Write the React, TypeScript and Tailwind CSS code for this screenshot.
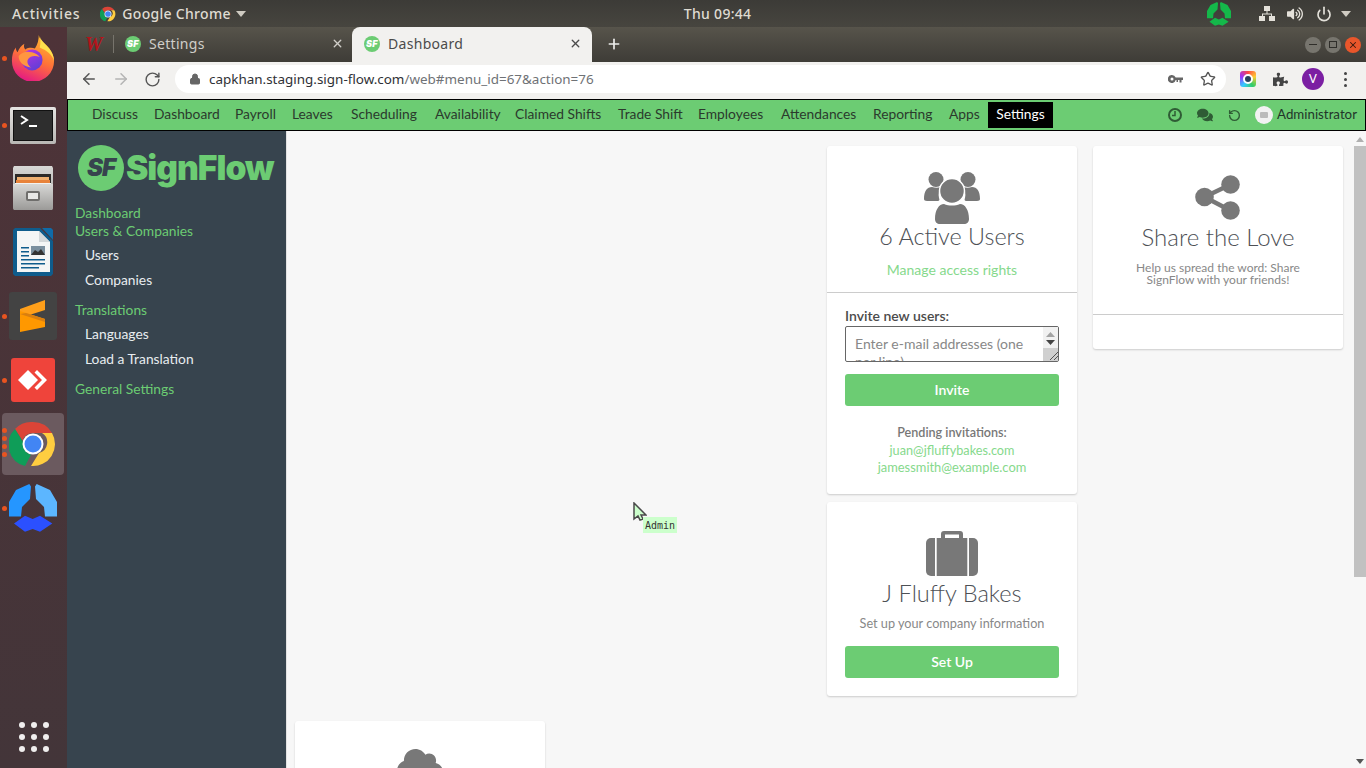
import * as React from "react"
import { FaComments, FaCloud, FaPuzzlePiece, FaVolumeUp } from "react-icons/fa"
import { ArrowLeft, ArrowRight, Lock, Plus, Power, RotateCcw, RotateCw, Star, X } from "lucide-react"

const raleway = "font-['Lato','Noto_Sans',sans-serif]"

const navItems = [
	{ title: "Discuss", width: "w-[62px]" },
	{ title: "Dashboard", width: "w-[81px]" },
	{ title: "Payroll", width: "w-[57px]" },
	{ title: "Leaves", width: "w-[59px]" },
	{ title: "Scheduling", width: "w-[84px]" },
	{ title: "Availability", width: "w-[80px]" },
	{ title: "Claimed Shifts", width: "w-[103px]" },
	{ title: "Trade Shift", width: "w-[80px]" },
	{ title: "Employees", width: "w-[83px]" },
	{ title: "Attendances", width: "w-[92px]" },
	{ title: "Reporting", width: "w-[76px]" },
	{ title: "Apps", width: "w-[47px]" },
]

function ChromeIcon({ size }: { size: number }) {
	return (
		<svg width={size} height={size} viewBox="0 0 48 48">
			<path d="M24 2a22 22 0 0 1 19 11H24a11 11 0 0 0-10.500 7.500L6 9A22 22 0 0 1 24 2z" fill="#db4437" />
			<path d="M6 9l8 13a11 11 0 0 0 8 12.800L16 46A22 22 0 0 1 6 9z" fill="#0f9d58" />
			<path d="M43 13a22 22 0 0 1-21 33l8-13a11 11 0 0 0 3-20z" fill="#ffcd40" />
			<circle cx="24" cy="24" r="10.500" fill="#fff" />
			<circle cx="24" cy="24" r="8.500" fill="#4285f4" />
		</svg>
	)
}

function TriLogo({ size, left, right, bottom }: { size: number; left: string; right: string; bottom: string }) {
	return (
		<svg width={size} height={size} viewBox="0 0 48 48">
			<polygon points="20.300,0 22,2.500 21,15 13,23 12,32.500 0,32.500 0,18 7,6" fill={left} />
			<polygon points="27.700,0 26,2.500 27,15 35,23 36,32.500 48,32.500 48,18 41,6" fill={right} />
			<polygon points="5,39.400 16,31.700 23.700,35 31,31.700 43.300,39.400 31,47.700 23.700,45 16,47.700" fill={bottom} />
		</svg>
	)
}

function SfBadge({ size }: { size: number }) {
	return (
		<div className="flex shrink-0 items-center justify-center rounded-full bg-[#6ccc73]" style={{ width: size, height: size }}>
			<span className="font-['Inter',sans-serif] font-black italic leading-none text-white text-[9px]">SF</span>
		</div>
	)
}

function Firefox() {
	return (
		<svg width="46" height="46" viewBox="0 0 46 48">
			<defs>
				<linearGradient id="ffa" x1="0.700" y1="0" x2="0.300" y2="1">
					<stop offset="0" stopColor="#ffbd2e" />
					<stop offset="0.500" stopColor="#ff7139" />
					<stop offset="1" stopColor="#e31587" />
				</linearGradient>
				<linearGradient id="ffb" x1="0.200" y1="0" x2="0.800" y2="1">
					<stop offset="0" stopColor="#b833e1" />
					<stop offset="1" stopColor="#5b3fd6" />
				</linearGradient>
			</defs>
			<path d="M29 0c1 6 7 9 11 14 3 4 5 8 5 13a22 22 0 1 1-44 0c0-5 1-10 4-14 0 2 1 4 2 5 1-4 4-7 7-9-1 3 0 5 1 6 3-2 7-2 10-1 3-4 4-9 4-14z" fill="url(#ffa)" />
			<path d="M30 1c1 5 6 8 10 13 3 4 5 9 5 13-2-7-8-11-15-14 1-4 1-8 0-12z" fill="#ffe14d" />
			<circle cx="22" cy="26" r="11" fill="url(#ffb)" />
			<path d="M8 22c4-5 9-5 14-4 3 1 6 2 8 5-5-2-10-1-12 2-2 3 0 7 3 9-7-1-13-5-13-12z" fill="#ff9640" />
		</svg>
	)
}

function Terminal() {
	return (
		<div className="flex h-[37px] w-[46px] items-center justify-center rounded-[2px] bg-gradient-to-b from-[#e5e4e2] to-[#b8b7b4]">
			<div className="h-[31px] w-[40px] border border-[#111] bg-[#2e2e2e] pl-[6px] pt-[4px]">
				<svg width="20" height="16" viewBox="0 0 20 16">
					<path d="M1 1l6 4-6 4" stroke="#fff" strokeWidth="2" fill="none" />
					<rect x="9" y="10" width="8" height="2" fill="#fff" />
				</svg>
			</div>
		</div>
	)
}

function FileCabinet() {
	return (
		<svg width="42" height="44" viewBox="0 0 42 44">
			<defs>
				<linearGradient id="cab" x1="0" y1="0" x2="0" y2="1">
					<stop offset="0" stopColor="#d8d8d6" />
					<stop offset="1" stopColor="#9b9a98" />
				</linearGradient>
			</defs>
			<path d="M2 0h38l1 2v40l-1 2H2l-1-2V2z" fill="url(#cab)" />
			<rect x="3" y="8" width="36" height="14" fill="#2d2a28" />
			<rect x="5" y="11" width="32" height="3" fill="#f0b070" />
			<rect x="4" y="14" width="34" height="3" fill="#e8833a" />
			<rect x="3" y="17" width="36" height="3" fill="#f2f2f0" />
			<path d="M1 18h40v24l-1 2H2l-1-2z" fill="url(#cab)" />
			<rect x="14" y="25" width="14" height="10" rx="2" fill="#6f6e6c" />
			<rect x="16" y="27" width="10" height="6" fill="#e8e8e6" />
		</svg>
	)
}

function Writer() {
	return (
		<svg width="40" height="48" viewBox="0 0 40 48">
			<path d="M2 0h25l13 13v33l-2 2H2l-2-2V2z" fill="#0f5c8c" />
			<path d="M29 0h9l2 2v10z" fill="#0f6ba8" />
			<path d="M4 3h22l11 11v30H4z" fill="#f4f5f5" />
			<path d="M26 3v11h11z" fill="#d4d8da" />
			<rect x="18" y="18" width="14" height="9" fill="#7b8f9e" />
			<path d="M18 27l4-5 3 2 3-3 4 6z" fill="#333" />
			<rect x="8" y="19" width="8" height="1.500" fill="#0f5c8c" />
			<rect x="8" y="23" width="8" height="1.500" fill="#0f5c8c" />
			<rect x="8" y="27" width="8" height="1.500" fill="#0f5c8c" />
			<rect x="8" y="31" width="24" height="1.500" fill="#0f5c8c" />
			<rect x="8" y="35" width="24" height="1.500" fill="#0f5c8c" />
			<rect x="8" y="39" width="18" height="1.500" fill="#0f5c8c" />
		</svg>
	)
}

function Sublime() {
	return (
		<div className="flex h-[48px] w-[48px] items-center justify-center rounded-[3px] bg-[#434343]">
			<svg width="26" height="32" viewBox="0 0 26 32">
				<path d="M25 0v10L0 18V9z" fill="#ff9f1a" />
				<path d="M0 11l25 8v8L0 32V22z" fill="#ff9800" />
				<path d="M0 14l25 8v-3L6 13z" fill="#d97f10" />
			</svg>
		</div>
	)
}

function AnyDesk() {
	return (
		<div className="flex h-[44px] w-[44px] items-center justify-center rounded-[3px] bg-[#ef443b]">
			<svg width="32" height="22" viewBox="0 0 32 22">
				<path d="M11 1l10 10-10 10L1 11z" fill="#fff" />
				<path d="M20 1l10 10-10 10-2.500-2.500L25 11l-7.500-7.500z" fill="#fff" />
			</svg>
		</div>
	)
}

function Dots({ count }: { count: number }) {
	return (
		<div className="flex w-[9px] shrink-0 flex-col items-center gap-[3px]">
			{Array.from({ length: count }).map((_, i) => (
				<span key={i} className="size-[5px] rounded-full bg-[#e95420]" />
			))}
		</div>
	)
}

function Dock() {
	return (
		<aside className="flex w-[67px] shrink-0 flex-col bg-gradient-to-b from-[#4e3338] to-[#433539] pt-[8px]">
			<div className="flex h-[46px] items-center"><Dots count={1} /><div className="ml-[1px]"><Firefox /></div></div>
			<div className="mt-[26px] flex h-[37px] items-center"><Dots count={1} /><div className="ml-[1px]"><Terminal /></div></div>
			<div className="mt-[22px] flex h-[44px] items-center pl-[12px]"><FileCabinet /></div>
			<div className="mt-[18px] flex h-[48px] items-center pl-[13px]"><Writer /></div>
			<div className="mt-[16px] flex h-[48px] items-center"><Dots count={1} /><Sublime /></div>
			<div className="mt-[18px] flex h-[44px] items-center"><Dots count={1} /><div className="ml-[2px]"><AnyDesk /></div></div>
			<div className="relative ml-[2px] mt-[11px] flex h-[62px] w-[62px] items-center justify-center rounded-[4px] bg-[#6b5a5f]">
				<div className="absolute left-[-2px] top-[15px]"><Dots count={4} /></div>
				<ChromeIcon size={48} />
			</div>
			<div className="mt-[8px] flex h-[50px] items-center"><Dots count={1} /><TriLogo size={48} left="#2596ff" right="#5cb6ff" bottom="#2b50ff" /></div>
			<div className="mt-auto mb-[16px] grid w-[30px] grid-cols-3 gap-[6px] self-center">
				{Array.from({ length: 9 }).map((_, i) => (
					<span key={i} className="size-[6px] rounded-full bg-[#f0eeee]" />
				))}
			</div>
		</aside>
	)
}

function TopBar() {
	return (
		<header className="flex h-[27px] shrink-0 items-center bg-gradient-to-b from-[#3c3b37] to-[#47453f] font-['Noto_Sans',sans-serif] text-[14px] font-medium tracking-[0.3px] text-[#dfdbd2]">
			<span className="ml-[12px] tracking-[0.8px]">Activities</span>
			<div className="ml-[20px]"><ChromeIcon size={16} /></div>
			<span className="ml-[6px]">Google Chrome</span>
			<svg className="ml-[5px]" width="10" height="6" viewBox="0 0 10 6"><path d="M0 0h10L5 6z" fill="#cfcbc2" /></svg>
			<span className="ml-[438px]">Thu 09:44</span>
			<div className="ml-auto flex items-center">
				<TriLogo size={24} left="#14b84a" right="#14b84a" bottom="#14b84a" />
				<svg className="ml-[28px]" width="16" height="16" viewBox="0 0 16 16" fill="#e4e1da">
					<rect x="5" y="0" width="6" height="5" />
					<rect x="0" y="10" width="6" height="5" />
					<rect x="10" y="10" width="6" height="5" />
					<path d="M7.500 5h1v2.500H13V10h-1V8.500H4V10H3V7.500h4.500z" />
				</svg>
				<FaVolumeUp className="ml-[12px] size-[16px] text-[#e4e1da]" />
				<Power className="ml-[13px] size-[16px] text-[#e4e1da]" strokeWidth={2.5} />
				<svg className="ml-[9px] mr-[15px]" width="10" height="6" viewBox="0 0 10 6"><path d="M0 0h10L5 6z" fill="#cfcbc2" /></svg>
			</div>
		</header>
	)
}

function TabStrip() {
	return (
		<div className="flex h-[35px] shrink-0 bg-gradient-to-b from-[#57544b] to-[#3e3c37] font-['Noto_Sans',sans-serif] text-[14px] tracking-[0.3px]">
			<div className="flex h-full w-[285px] items-center pb-[2px] pl-[18px] text-[#d0cec9]">
				<span className="w-[18px] font-['Liberation_Serif',serif] text-[20px] font-bold italic leading-none text-[#b3141b]">W</span>
				<span className="ml-[10px] h-[18px] w-px bg-[#77746c]" />
				<div className="ml-[11px]"><SfBadge size={16} /></div>
				<span className="ml-[8px]">Settings</span>
				<X className="ml-auto mr-[8px] size-[13px]" strokeWidth={2.5} />
			</div>
			<div className="flex h-full w-[240px] items-center rounded-t-[8px] bg-[#f2f1ef] pb-[2px] pl-[12px] pr-[10px] text-[#4b4b4b]">
				<SfBadge size={16} />
				<span className="ml-[8px]">Dashboard</span>
				<X className="ml-auto size-[13px] text-[#4b4b4b]" strokeWidth={2.5} />
			</div>
			<Plus className="ml-[14px] mt-[9px] size-[16px] text-[#eeeeec]" strokeWidth={2.5} />
			<div className="ml-auto mr-[5px] flex items-center gap-[4px]">
				<span className="flex size-[16px] items-center justify-center rounded-full bg-[#77756e]"><span className="h-px w-[8px] bg-[#2f2e2a]" /></span>
				<span className="flex size-[16px] items-center justify-center rounded-full bg-[#77756e]"><span className="h-[7px] w-[8px] border border-[#2f2e2a]" /></span>
				<span className="flex size-[16px] items-center justify-center rounded-full bg-[#e9562b]"><X className="size-[10px] text-[#3a1b10]" strokeWidth={2.5} /></span>
			</div>
		</div>
	)
}

function Toolbar() {
	return (
		<div className="flex h-[37px] shrink-0 items-center bg-[#f2f1ef] pb-[3px]">
			<ArrowLeft className="ml-[13px] size-[18px] text-[#555]" strokeWidth={2} />
			<ArrowRight className="ml-[14px] size-[18px] text-[#b4b4b4]" strokeWidth={2} />
			<RotateCw className="ml-[14px] size-[17px] text-[#555]" strokeWidth={2} />
			<div className="ml-[14px] flex h-[28px] w-[1051px] items-center rounded-full bg-white pl-[14px] pr-[10px] font-['Noto_Sans',sans-serif] text-[13.450px]">
				<Lock className="size-[12px] text-[#666]" fill="#666" strokeWidth={2} />
				<span className="ml-[8px] text-[#2f3136]">capkhan.staging.sign-flow.com</span>
				<span className="text-[#6f7276]">/web#menu_id=67&amp;action=76</span>
				<svg className="ml-auto" width="15" height="8" viewBox="0 0 15 8" fill="#666">
					<path d="M4 0a4 4 0 0 1 3.700 2.500H15V5h-1.500v2.500h-2V5H10v2H8.500V5h-.8A4 4 0 1 1 4 0zm0 2.500a1.500 1.500 0 1 0 0 3 1.500 1.500 0 0 0 0-3z" />
				</svg>
				<Star className="ml-[17px] size-[16px] text-[#555]" strokeWidth={2} />
			</div>
			<div className="ml-[14px] flex size-[16px] items-center justify-center rounded-[3px] bg-[conic-gradient(#f44,#fc3,#3c6,#3cf,#93f,#f44)]">
				<span className="size-[10px] rounded-full border-2 border-white bg-[#27405c]" />
			</div>
			<FaPuzzlePiece className="ml-[17px] size-[15px] text-[#444]" />
			<span className="ml-[14px] flex size-[22px] items-center justify-center rounded-full bg-[#7b1fa2] font-['Noto_Sans',sans-serif] text-[13px] text-white">V</span>
			<div className="ml-[20px] flex flex-col gap-[3px]">
				<span className="size-[3px] rounded-full bg-[#444]" />
				<span className="size-[3px] rounded-full bg-[#444]" />
				<span className="size-[3px] rounded-full bg-[#444]" />
			</div>
		</div>
	)
}

function AppNav() {
	return (
		<nav className={`flex h-[32px] shrink-0 items-center border border-black bg-[#6ccc73] pl-[16px] text-[13.800px] text-[#2b3a2d] ${raleway}`}>
			{navItems.map((item) => (
				<a key={item.title} className={`flex h-[26px] items-center whitespace-nowrap pb-px pl-[8px] ${item.width}`}>
					{item.title}
				</a>
			))}
			<a className="flex h-[26px] w-[65px] items-center justify-center bg-black pb-px text-white">Settings</a>
			<div className="ml-auto flex items-center pr-[8px] text-[#25482b]">
				<svg width="14" height="14" viewBox="0 0 14 14" fill="none" stroke="#2f5c35" strokeWidth="2">
					<circle cx="7" cy="7" r="6" />
					<path d="M7 3v4.500H4" strokeWidth="1.500" />
				</svg>
				<FaComments className="ml-[15px] size-[16px] text-[#2f5c35]" />
				<RotateCcw className="ml-[15px] size-[13px] text-[#2f5c35]" strokeWidth={2.5} />
				<span className="ml-[14px] flex size-[18px] items-center justify-center rounded-full bg-[#f2f2f2]">
					<span className="h-[6px] w-[8px] rounded-[1px] bg-[#bbb]" />
				</span>
				<span className="ml-[4px] pb-px text-[13.300px] text-[#22352a]">Administrator</span>
			</div>
		</nav>
	)
}

function Sidebar() {
	const green = "text-[#6ccc73]"
	const white = "text-[#e8edf0] pl-[10px]"
	return (
		<aside className={`flex w-[220px] shrink-0 flex-col border-r border-[#e2e2e2] bg-[#37444e] pl-[8px] text-[13.800px] ${raleway}`}>
			<div className="mt-[14px] flex h-[46px] items-center pl-[3px]">
				<div className="relative flex size-[46px] shrink-0 items-center justify-center rounded-full bg-[#6ccc73]">
					<span className="font-['Inter',sans-serif] text-[24px] font-black italic leading-none tracking-[-1px] text-[#37444e]">SF</span>
				</div>
				<span className="ml-[2px] font-['Inter',sans-serif] text-[33.600px] font-black leading-none tracking-[-1px] text-[#6ccc73]">SignFlow</span>
			</div>
			<a className={`mt-[13px] h-[18px] leading-[18px] ${green}`}>Dashboard</a>
			<a className={`h-[18px] leading-[18px] ${green}`}>Users &amp; Companies</a>
			<a className={`mt-[6px] h-[18px] leading-[18px] ${white}`}>Users</a>
			<a className={`mt-[7px] h-[18px] leading-[18px] ${white}`}>Companies</a>
			<a className={`mt-[12px] h-[18px] leading-[18px] ${green}`}>Translations</a>
			<a className={`mt-[6px] h-[18px] leading-[18px] ${white}`}>Languages</a>
			<a className={`mt-[7px] h-[18px] leading-[18px] ${white}`}>Load a Translation</a>
			<a className={`mt-[12px] h-[18px] leading-[18px] ${green}`}>General Settings</a>
		</aside>
	)
}

function UsersIcon() {
	return (
		<svg width="56" height="52" viewBox="0 0 56 52" fill="#787878">
			<circle cx="12" cy="7.500" r="7.500" />
			<circle cx="44" cy="7.500" r="7.500" />
			<path d="M0 27c0-8 3-12 8-12 3 1 6 1 9 0-2 3-3 7-2 11 1 2 0 3-1 3H3c-2 0-3-1-3-2z" />
			<path d="M56 27c0-8-3-12-8-12-3 1-6 1-9 0 2 3 3 7 2 11-1 2 0 3 1 3h11c2 0 3-1 3-2z" />
			<circle cx="28" cy="19" r="12.500" stroke="#fff" strokeWidth="1.500" />
			<path d="M11 47c0-9 4-15 9-15 5 2 11 2 16 0 5 0 9 6 9 15 0 3-2 5-5 5H16c-3 0-5-2-5-5z" />
		</svg>
	)
}

function SuitcaseIcon() {
	return (
		<svg width="52" height="45" viewBox="0 0 52 45" fill="#787878">
			<path d="M15 7V3a3 3 0 0 1 3-3h16a3 3 0 0 1 3 3v4h-4V3.500H19V7z" />
			<path d="M9 7v38H5a5 5 0 0 1-5-5V12a5 5 0 0 1 5-5z" />
			<rect x="10.700" y="7" width="30.600" height="38" />
			<path d="M43 7v38h4a5 5 0 0 0 5-5V12a5 5 0 0 0-5-5z" />
		</svg>
	)
}

function ShareIcon() {
	return (
		<svg width="46" height="46" viewBox="0 0 46 46" fill="#787878">
			<path d="M9.500 22L35.500 9.500M9.500 22l26 13.500" stroke="#787878" strokeWidth="4.500" />
			<circle cx="9.500" cy="22" r="9.300" />
			<circle cx="35.500" cy="9.500" r="9.300" />
			<circle cx="35.500" cy="35.500" r="9.300" />
		</svg>
	)
}

function Card({ children, className }: { children: React.ReactNode; className?: string }) {
	return (
		<div className={`w-[250px] rounded-[3px] bg-white shadow-[0_1px_2px_rgba(0,0,0,0.18)] ${className ?? ""}`}>
			{children}
		</div>
	)
}

function Content() {
	return (
		<main className={`relative flex min-w-0 flex-1 flex-col overflow-hidden bg-[#f7f7f7] pt-[15px] text-center ${raleway}`}>
			<div className="flex justify-end gap-[16px] pr-[23px]">
				<div className="flex flex-col gap-[8px]">
					<Card className="h-[348px]">
						<div className="flex h-[147px] flex-col items-center border-b border-[#ccc] pt-[26px]">
							<UsersIcon />
							<h2 className="mt-[-2px] text-[23.400px] font-light leading-[29px] text-[#4d5055]">6 Active Users</h2>
							<a className="mt-[10px] text-[14px] leading-[18px] text-[#86d98c]">Manage access rights</a>
						</div>
						<div className="px-[18px] pt-[14px]">
							<label className="block text-left text-[14px] font-semibold leading-[17px] text-[#4b4b4b]">Invite new users:</label>
							<div className="relative mt-[2px]">
								<textarea
									className="block h-[36px] w-full resize-none overflow-hidden rounded-[2px] border border-[#666] py-[8px] pl-[9px] pr-[20px] text-[14px] leading-[18px] text-[#555] placeholder:text-[#888]"
									placeholder="Enter e-mail addresses (one per line)"
								/>
								<div className="absolute bottom-px right-px top-px flex w-[15px] flex-col items-center bg-[#f1f1f1]">
									<svg className="mt-[5px]" width="9" height="5" viewBox="0 0 9 5"><path d="M4.500 0L9 5H0z" fill="#a3a3a3" /></svg>
									<svg className="mt-[3px]" width="9" height="5" viewBox="0 0 9 5"><path d="M4.500 5L0 0h9z" fill="#444" /></svg>
									<div className="mt-[3px] w-full flex-1 bg-[#d0d0d0]">
										<svg className="ml-auto mt-[2px]" width="10" height="10" viewBox="0 0 10 10"><path d="M2 10l8-8M6 10l4-4" stroke="#555" strokeWidth="1" /></svg>
									</div>
								</div>
							</div>
							<button className="mt-[12px] h-[32px] w-full rounded-[3px] bg-[#6ccc73] pb-[2px] text-[14px] font-semibold text-white">Invite</button>
							<p className="mt-[19px] text-[12.600px] font-semibold leading-[16px] text-[#777]">Pending invitations:</p>
							<p className="mt-px text-[12.700px] leading-[17px] text-[#86d98c]">juan@jfluffybakes.com</p>
							<p className="text-[12.900px] leading-[17px] text-[#86d98c]">jamessmith@example.com</p>
						</div>
					</Card>
					<Card className="flex h-[194px] flex-col items-center px-[18px] pt-[29px]">
						<SuitcaseIcon />
						<h2 className="mt-[3px] text-[23.600px] font-light leading-[29px] text-[#4d5055]">J Fluffy Bakes</h2>
						<p className="mt-[7px] text-[12.700px] leading-[17px] text-[#888]">Set up your company information</p>
						<button className="mt-[14px] h-[32px] w-full rounded-[3px] bg-[#6ccc73] pb-px text-[14px] font-semibold text-white">Set Up</button>
					</Card>
				</div>
				<Card className="h-[203px]">
					<div className="flex h-[169px] flex-col items-center border-b border-[#ccc] px-[30px] pt-[29px]">
						<ShareIcon />
						<h2 className="mt-px text-[24px] font-light leading-[29px] text-[#4d5055]">Share the Love</h2>
						<p className="mt-[11px] text-[12px] leading-[12px] text-[#888]">Help us spread the word: Share SignFlow with your friends!</p>
					</div>
				</Card>
			</div>
			<div className="mt-[25px] pl-[8px]">
				<Card className="flex h-[200px] justify-center pt-[21px]">
					<FaCloud className="size-[46px] text-[#787878]" />
				</Card>
			</div>

			{/* remote cursor of the other session */}
			<div className="absolute left-[346px] top-[371px]">
				<svg width="14" height="20" viewBox="0 0 14 20">
					<path d="M1 1v16l4-3 2 4 3-1-2-4h5z" fill="#ccffcc" stroke="#4a4a4a" strokeWidth="1.500" />
				</svg>
			</div>
			<div className="absolute left-[356px] top-[386px] flex h-[16px] w-[34px] items-center justify-center bg-[#ccffcc] pt-[2px] font-['DejaVu_Sans_Mono',monospace] text-[10px] leading-none text-[#333]">Admin</div>

			{/* page scrollbar */}
			<div className="absolute bottom-0 right-0 top-0 flex w-[13px] flex-col items-center bg-[#f7f7f7]">
				<svg className="mt-[6px]" width="8" height="5" viewBox="0 0 8 5"><path d="M4 0l4 5H0z" fill="#b0b0b0" /></svg>
				<div className="mt-[4px] h-[431px] w-[12px] bg-[#c1c1c1]" />
				<svg className="mt-auto mb-[4px]" width="8" height="5" viewBox="0 0 8 5"><path d="M4 5L0 0h8z" fill="#555" /></svg>
			</div>
		</main>
	)
}

export default function App() {
	return (
		<div className="flex h-[768px] w-[1366px] flex-col overflow-hidden">
			<TopBar />
			<div className="flex min-h-0 flex-1">
				<Dock />
				<div className="flex min-w-0 flex-1 flex-col">
					<TabStrip />
					<Toolbar />
					<AppNav />
					<div className="flex min-h-0 flex-1">
						<Sidebar />
						<Content />
					</div>
				</div>
			</div>
		</div>
	)
}
